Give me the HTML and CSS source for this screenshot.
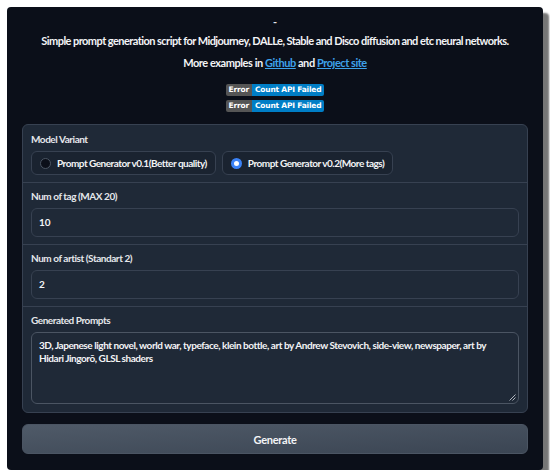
FILE: index.html
```html
<!DOCTYPE html>
<html>
<head>
<meta charset="utf-8">
<link rel="stylesheet" href="styles.css">
</head>
<body>
<div class="app">
  <div class="header">
    <div class="title">-</div>
    <p class="desc">Simple prompt generation script for Midjourney, DALLe, Stable and Disco diffusion and etc neural networks.</p>
    <p class="more">More examples in <a href="#">Github</a> and <a href="#">Project site</a></p>
    <div class="badges">
      <div class="badge"><span class="b-l">Error</span><span class="b-r">Count API Failed</span></div>
      <div class="badge"><span class="b-l">Error</span><span class="b-r">Count API Failed</span></div>
    </div>
  </div>
  <div class="form">
    <div class="section first">
      <div class="label">Model Variant</div>
      <div class="radios">
        <label class="radio r1"><span class="dot"></span>Prompt Generator v0.1(Better quality)</label>
        <label class="radio r2"><span class="dot on"></span>Prompt Generator v0.2(More tags)</label>
      </div>
    </div>
    <div class="section">
      <div class="label">Num of tag (MAX 20)</div>
      <div class="input">10</div>
    </div>
    <div class="section">
      <div class="label">Num of artist (Standart 2)</div>
      <div class="input">2</div>
    </div>
    <div class="section last">
      <div class="label">Generated Prompts</div>
      <div class="textarea">3D, Japenese light novel, world war, typeface, klein bottle, art by Andrew Stevovich, side-view, newspaper, art by Hidari Jingorō, GLSL shaders<svg class="grip" width="7" height="7" viewBox="0 0 7 7"><path d="M6.5 0.5L0.5 6.5M6.5 3.5L3.5 6.5" stroke="#aeb4bd" stroke-width="1"/></svg></div>
    </div>
  </div>
  <button class="gen">Generate</button>
</div>
</body>
</html>
```
FILE: styles.css
```css
html, body { margin: 0; padding: 0; background: #ffffff; }
body { font-family: "Lato", "Noto Sans", sans-serif; color: #f3f4f6; }
.app {
  margin: 7px 0 0 7px;
  width: 536px;
  height: 463px;
  box-sizing: border-box;
  background: #0b0f19;
  border-radius: 4px;
  box-shadow: 6px 6px 2px #767676;
  padding: 6px 15px 0 15px;
}
.header { text-align: center; font-weight: 700; }
.title { font-size: 11px; line-height: 18px; height: 18px; color: #e5e7eb; }
.desc { margin: 1px 0 0; font-size: 11px; line-height: 18px; letter-spacing: -0.55px; white-space: nowrap; }
.more { margin: 4px 0 0; font-size: 11px; line-height: 18px; letter-spacing: -0.45px; }
.more a { color: #3ea2ea; text-decoration: underline; }
.badges { margin-top: 12px; display: flex; flex-direction: column; align-items: center; gap: 4px; }
.badge { display: flex; height: 12px; border-radius: 2px; overflow: hidden; font-family: "DejaVu Sans", sans-serif; font-size: 7.5px; line-height: 12px; font-weight: 700; letter-spacing: -0.2px; color: #fff; }
.b-l { background: #555555; padding: 0 3px; }
.b-r { background: #007ec6; padding: 0 3px; }
.form {
  margin-top: 12px;
  background: #1f2937;
  border: 1px solid #374151;
  border-radius: 6px;
  overflow: hidden;
}
.section { padding: 7px 8px 7px 8px; border-bottom: 1px solid #374151; }
.section.first { padding-top: 8px; }
.section.last { border-bottom: none; padding-bottom: 8px; }
.label { font-size: 10px; font-weight: 700; line-height: 13px; color: #e5e7eb; margin-bottom: 5px; letter-spacing: -0.45px; }
.radios { display: flex; gap: 6px; }
.radio {
  display: flex; align-items: center; gap: 6px;
  height: 24px; box-sizing: border-box;
  padding: 0 8px;
  border: 1px solid #374151; border-radius: 6px;
  background: #1a2330;
  font-size: 10px; font-weight: 700; color: #f3f4f6; letter-spacing: -0.5px;
}
.dot { width: 11px; height: 11px; border-radius: 50%; border: 1px solid #4b5563; background: #0b0f19; box-sizing: border-box; flex: none; }
.dot.on { background: #ffffff; border: 3.5px solid #3b82f6; }
.input {
  height: 29px; box-sizing: border-box;
  border: 1px solid #374151; border-radius: 6px;
  background: #1f2937;
  padding: 0 7px;
  font-size: 10px; font-weight: 700; line-height: 27px;
}
.textarea {
  position: relative;
  height: 72px; box-sizing: border-box;
  border: 1px solid #4b5563; border-radius: 6px;
  background: #1f2937;
  padding: 6px 7px;
  font-size: 10px; font-weight: 700; line-height: 13px; letter-spacing: -0.45px;
}
.grip { position: absolute; right: 2px; bottom: 2px; }
.gen {
  display: block; width: 100%;
  margin-top: 11px; height: 30px;
  border: 1px solid #4b5563; border-radius: 6px;
  background: linear-gradient(to bottom right, #4f5a68, #3b4553);
  color: #f3f4f6; font-family: inherit; font-size: 11px; font-weight: 700; letter-spacing: -0.3px;
}
```
